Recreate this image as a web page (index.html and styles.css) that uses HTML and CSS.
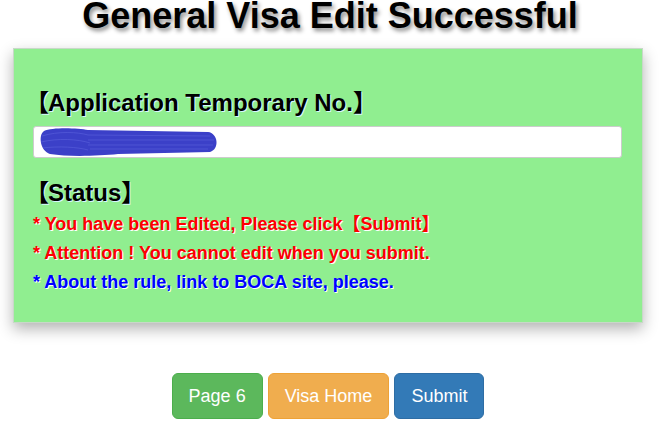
FILE: index.html
```html
<!DOCTYPE html>
<html>
<head>
<meta charset="utf-8">
<link rel="stylesheet" href="styles.css">
</head>
<body>
<h1 class="title">General Visa Edit Successful</h1>
<div class="panel">
  <h2 class="label"><span class="bo">【</span>Application Temporary No.<span class="bc">】</span></h2>
  <div class="field">
    <svg class="scribble" width="182" height="30" viewBox="0 0 182 30">
      <path d="M6 4 C14 0 40 1 50 3 L170 5 C180 6 182 22 172 25 L80 27 C60 29 30 30 12 27 C2 24 0 8 6 4 Z" fill="#3b40c8"/>
      <path d="M4 9 C20 4 40 5 50 8 M3 15 C20 11 40 12 52 16 M5 21 C20 19 40 20 50 23 M50 8 L172 9 M50 13 L176 13 M50 18 L175 18 M52 22 L170 22" stroke="#5a60dc" stroke-width="1" fill="none" opacity="0.6"/>
    </svg>
  </div>
  <h2 class="label status"><span class="bo">【</span>Status<span class="bc">】</span></h2>
  <p class="msg red">* You have been Edited, Please click【Submit】</p>
  <p class="msg red">* Attention ! You cannot edit when you submit.</p>
  <p class="msg blue">* About the rule, link to BOCA site, please.</p>
</div>
<div class="actions">
  <button class="btn green">Page 6</button>
  <button class="btn orange">Visa Home</button>
  <button class="btn blue-btn">Submit</button>
</div>
</body>
</html>
```
FILE: styles.css
```css
html, body { margin: 0; padding: 0; background: #fff; }
body { font-family: "Liberation Sans", Arial, "Noto Sans CJK JP", sans-serif; overflow: hidden; }
.title {
  margin: 0;
  padding-right: 6px;
  text-align: center;
  font-size: 36px;
  font-weight: bold;
  line-height: 31px;
  color: #000;
  text-shadow: 2px 3px 4px rgba(0,0,0,0.45);
}
.panel {
  margin: 17px 23px 0 13px;
  background: #90ee90;
  border: 1px solid #c8d8c8;
  box-shadow: 0 6px 14px rgba(0,0,0,0.3);
  padding: 39px 20px 25px 19px;
}
.label {
  margin: 0;
  font-size: 24px;
  font-weight: bold;
  line-height: 30px;
  color: #000;
  text-shadow: 1px 1px 0 #d6f6ff;
}
.bo { margin-left: -8px; margin-right: -1px; }
.field {
  margin-top: 8px;
  height: 30px;
  background: #fff;
  border: 1px solid #ccc;
  border-radius: 3px;
  display: flex;
  align-items: center;
  padding-left: 4px;
}
.scribble { display: block; }
.status { margin-top: 20px; }
.msg {
  margin: 0;
  font-size: 18px;
  font-weight: bold;
  line-height: 29px;
  text-shadow: 1px 1px 0 #fff;
}
.status + .msg { margin-top: 2px; }
.msg.red { color: #f00; }
.msg.blue { color: #00f; }
.actions {
  display: flex;
  justify-content: center;
  gap: 5px;
  margin-top: 50px;
  padding-right: 10px;
}
.btn {
  font-family: "Liberation Sans", Arial, sans-serif;
  font-size: 18px;
  line-height: 24px;
  padding: 10px 16px;
  border-radius: 6px;
  border: 1px solid transparent;
  color: #fff;
  cursor: pointer;
}
.green { background: #5cb85c; border-color: #4cae4c; }
.orange { background: #f0ad4e; border-color: #eea236; }
.blue-btn { background: #337ab7; border-color: #2e6da4; }
```
